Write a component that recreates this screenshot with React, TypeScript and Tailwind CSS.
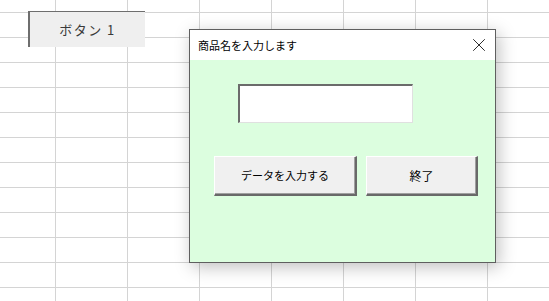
import { X } from "lucide-react";

const cols = [55, 71, 71, 71, 71, 71, 71, 71];
const rows = [12, 24, 24, 24, 24, 24, 24, 24, 24, 24, 24, 24, 24];

export default function App() {
  return (
    <div className="relative w-[549px] h-[301px] overflow-hidden bg-white" style={{ fontFamily: '"Noto Sans CJK JP", "Noto Sans", sans-serif' }}>
      {/* sheet grid */}
      <div
        className="grid gap-px bg-[#d4d4d4] w-max"
        style={{ gridTemplateColumns: cols.map((c) => c + "px").join(" "), gridTemplateRows: rows.map((r) => r + "px").join(" ") }}
      >
        {rows.map((_, r) => cols.map((_, c) => <div key={r + "-" + c} className="bg-white" />))}
      </div>

      {/* form button on the sheet */}
      <div className="absolute left-[28px] top-[11px] w-[117px] h-[36px] flex items-center justify-center bg-[#efefef] border-l-2 border-t border-[#6e6e6e] text-[13px] text-[#3a3a3a] tracking-[1.5px]">
        ボタン 1
      </div>

      {/* user form */}
      <div className="absolute left-[189px] top-[29px] w-[307px] h-[234px] flex flex-col border border-[#5f5f5f] bg-[#dcfedf] shadow-[3px_4px_16px_rgba(0,0,0,0.25)]">
        <div className="h-[30px] bg-white flex items-center justify-between pl-[8px] pr-[5px] shrink-0">
          <span className="text-[11px] text-black">商品名を入力します</span>
          <X className="w-[22px] h-[22px] text-black" strokeWidth={0.9} />
        </div>
        <div className="flex flex-col">
          <div className="ml-[48px] mt-[24px] w-[175px] h-[39px] bg-white border-t-2 border-l-2 border-t-[#6b6b6b] border-l-[#6b6b6b] border-b border-r border-b-[#e0e0e0] border-r-[#e0e0e0]" />
          <div className="ml-[24px] mt-[33px] flex gap-[9px]">
            <button className="w-[143px] h-[40px] bg-[#f0f0f0] border-t border-l border-t-white border-l-white border-b-2 border-r-2 border-b-[#696969] border-r-[#696969] shadow-[inset_-1px_-1px_0_#a0a0a0] text-[11px] text-black">
              データを入力する
            </button>
            <button className="w-[112px] h-[40px] bg-[#f0f0f0] border-t border-l border-t-white border-l-white border-b-2 border-r-2 border-b-[#696969] border-r-[#696969] shadow-[inset_-1px_-1px_0_#a0a0a0] text-[12px] text-black">
              終了
            </button>
          </div>
        </div>
      </div>
    </div>
  );
}
